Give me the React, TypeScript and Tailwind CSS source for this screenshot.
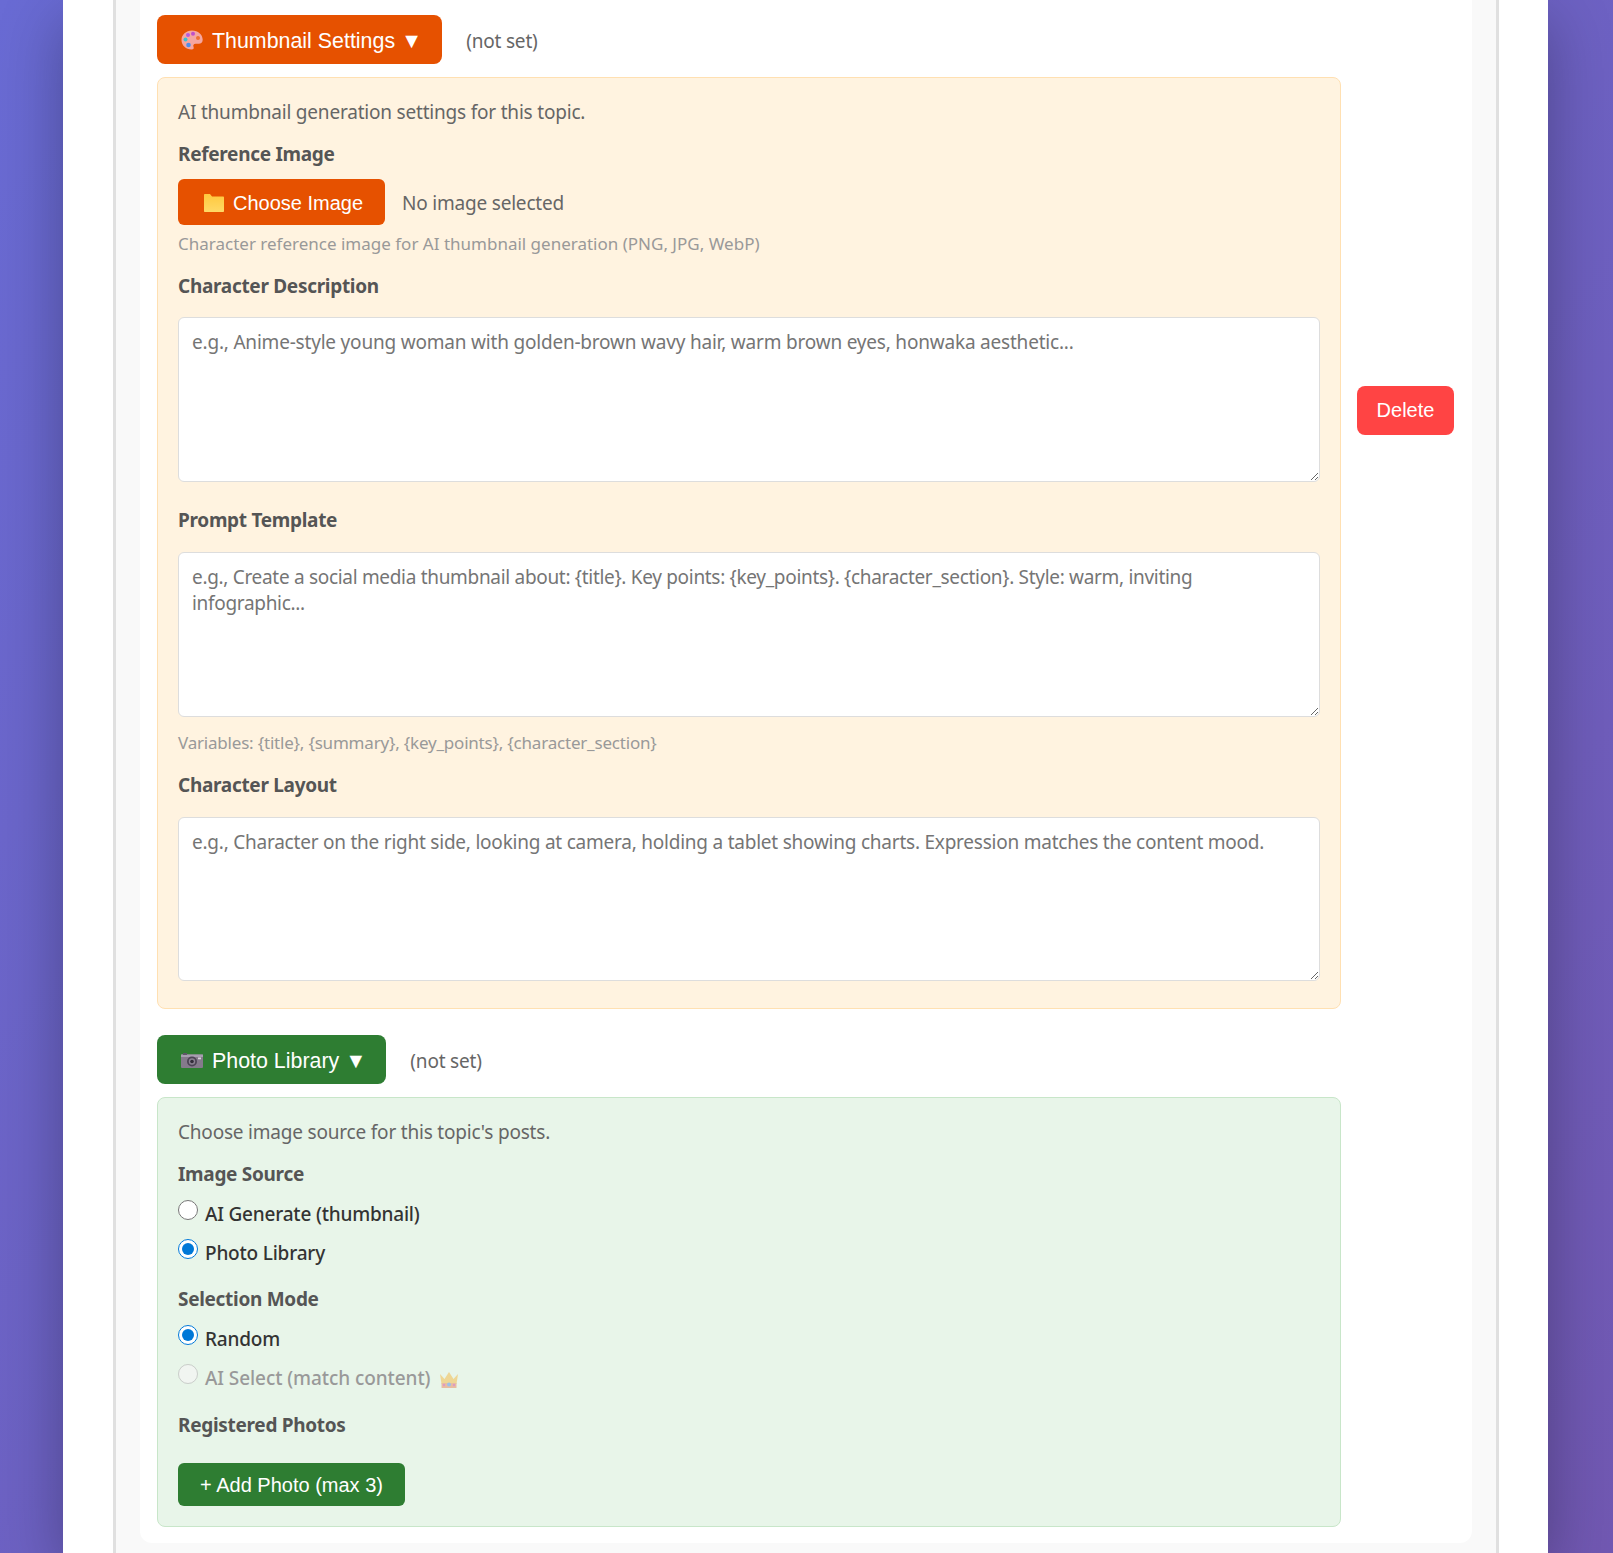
import type { ReactNode } from 'react';

const TEXT_FONT = "font-['Noto_Sans',sans-serif]";
const BTN_FONT = "font-['Liberation_Sans',Arial,sans-serif]";

const PaletteIcon = () => (
  <svg viewBox="0 0 22 20" className="w-[22px] h-[20px] shrink-0">
    <path d="M11 0.5C5 0.5 0.5 4.8 0.5 10c0 5.4 4.6 9.5 10 9.5 2.2 0 2.6-1.3 2-2.7-.7-1.6.2-3 2-3h3.2c2.4 0 4-1.6 4-4C21.700 4.500 17 0.500 11 0.500z" fill="#f5a6a0" />
    <circle cx="7" cy="5" r="2" fill="#b45ae0" />
    <circle cx="12" cy="3.800" r="2" fill="#c04fc8" />
    <circle cx="4.500" cy="9.500" r="2" fill="#3cc0d0" />
    <circle cx="7.500" cy="15" r="2.300" fill="#4f8fe8" />
    <circle cx="17" cy="8" r="2" fill="#f07030" />
  </svg>
);

const FolderIcon = () => (
  <svg viewBox="0 0 20 18" className="w-5 h-[18px] shrink-0">
    <defs>
      <linearGradient id="folderFill" x1="0" y1="0" x2="0" y2="1">
        <stop offset="0" stopColor="#ffc83d" />
        <stop offset="1" stopColor="#ffd966" />
      </linearGradient>
    </defs>
    <path d="M0 1C0 .4.400 0 1 0h5l2 2.500h11c.6 0 1 .4 1 1V17c0 .6-.4 1-1 1H1c-.6 0-1-.4-1-1z" fill="url(#folderFill)" />
  </svg>
);

const CameraIcon = () => (
  <svg viewBox="0 0 22 15" className="w-[22px] h-[15px] shrink-0">
    <rect x="0" y="1.500" width="22" height="13.500" rx="1" fill="#857a8c" />
    <rect x="0" y="1.500" width="22" height="2.500" fill="#a79eb0" />
    <rect x="2" y="0" width="4" height="2" fill="#5f5668" />
    <rect x="17" y="4.500" width="3" height="1.800" fill="#d8d4dc" />
    <circle cx="11" cy="8.500" r="5" fill="#4d4456" />
    <circle cx="11" cy="8.500" r="3.200" fill="#8a8192" />
    <circle cx="11" cy="8.500" r="1.800" fill="#332c3a" />
  </svg>
);

const CrownIcon = () => (
  <svg viewBox="0 0 20 16" className="w-5 h-4 shrink-0 opacity-50">
    <path d="M1 2l4.500 5L10 0l4.500 7L19 2l-1.500 10h-15z" fill="#f5b942" />
    <rect x="2.500" y="11" width="15" height="5" rx=".5" fill="#e8855a" />
    <circle cx="10" cy="12.500" r="2" fill="#4f8fe8" />
    <circle cx="5" cy="13" r="1.200" fill="#d6409f" />
    <circle cx="15" cy="13" r="1.200" fill="#d6409f" />
  </svg>
);

function Label({ children, className = '' }: { children: ReactNode; className?: string }) {
  return <div className={`h-7 leading-7 text-[19px] font-bold tracking-[-0.3px] text-[#555] ${className}`}>{children}</div>;
}

function Hint({ children, className = '' }: { children: ReactNode; className?: string }) {
  return <div className={`h-6 leading-6 text-[17px] text-[#999] ${className}`}>{children}</div>;
}

function Area({ placeholder, className = '' }: { placeholder: string; className?: string }) {
  return (
    <textarea
      placeholder={placeholder}
      className={`block w-full px-[13px] py-[11px] bg-white border border-[#ddd] rounded-md text-[19px] leading-[26px] placeholder:text-[#757575] resize-y outline-none ${TEXT_FONT} ${className}`}
    />
  );
}

function Radio({ label, checked, disabled, name, className = '', children }: { label: string; checked?: boolean; disabled?: boolean; name: string; className?: string; children?: ReactNode }) {
  return (
    <label className={`flex items-start h-7 ${className}`}>
      <input type="radio" name={name} defaultChecked={checked} disabled={disabled} className="w-5 h-5 m-0 shrink-0 accent-[#0078d7]" />
      <span className={`ml-[7px] leading-7 text-[19px] font-medium ${disabled ? 'text-[#999] tracking-[-0.08px]' : 'text-[#333] tracking-[-0.2px]'}`}>{label}</span>
      {children}
    </label>
  );
}

function ToggleRow({ icon, title, color, className = '' }: { icon: ReactNode; title: string; color: string; className?: string }) {
  return (
    <div className={`flex items-center gap-6 ${className}`}>
      <button className={`flex items-center h-[49px] pl-6 pr-5 pt-[3px] rounded-lg text-white text-[21.4px] ${color} ${BTN_FONT}`}>
        <span className="relative -top-px">{icon}</span>
        <span className="ml-[9px]">{title} ▼</span>
      </button>
      <span className="text-[19px] tracking-[-0.2px] text-[#666] relative top-[2px]">(not set)</span>
    </div>
  );
}

export default function App() {
  return (
    <div className={`h-[1553px] overflow-hidden bg-[linear-gradient(135deg,#696bd4,#7158b2)] flex justify-center pr-[2px] ${TEXT_FONT}`}>
      <div className="w-[1485px] h-full bg-white pl-[50px] pr-[49px] shadow-[0_20px_60px_rgba(0,0,0,0.3)]">
        <div className="h-full border-x-[3px] border-[#e0e0e0] bg-[#f9f9f9] px-6">
          <div className="h-[1543px] bg-white rounded-b-xl px-[17px] pt-[15px] flex items-start">
            <div className="w-[1184px] shrink-0">
              <ToggleRow icon={<PaletteIcon />} title="Thumbnail Settings" color="bg-[#e65100]" />

              {/* Thumbnail panel */}
              <div className="mt-[13px] h-[932px] bg-[#fff3e0] border border-[#ffe0b2] rounded-lg px-5 pt-5">
                <p className="h-7 leading-7 text-[19px] tracking-[-0.2px] text-[#666]">AI thumbnail generation settings for this topic.</p>
                <Label className="mt-3.5">Reference Image</Label>
                <div className="mt-[11px] flex items-center">
                  <button className={`flex items-center justify-center w-[207px] h-[46px] rounded-md bg-[#e65100] text-white text-[20px] leading-[46px] pt-[2px] pl-1 ${BTN_FONT}`}>
                    <FolderIcon />
                    <span className="ml-[9px]">Choose Image</span>
                  </button>
                  <span className="ml-[17px] text-[19px] tracking-[-0.2px] text-[#666] relative top-[1px]">No image selected</span>
                </div>
                <Hint className="mt-[7px]">Character reference image for AI thumbnail generation (PNG, JPG, WebP)</Hint>
                <Label className="mt-4">Character Description</Label>
                <Area className="mt-[17px] h-[165px] tracking-[-0.2px]" placeholder="e.g., Anime-style young woman with golden-brown wavy hair, warm brown eyes, honwaka aesthetic..." />
                <Label className="mt-6">Prompt Template</Label>
                <Area className="mt-[18px] h-[165px] tracking-[-0.31px]" placeholder="e.g., Create a social media thumbnail about: {title}. Key points: {key_points}. {character_section}. Style: warm, inviting infographic..." />
                <Hint className="mt-3.5 tracking-[-0.2px]">{'Variables: {title}, {summary}, {key_points}, {character_section}'}</Hint>
                <Label className="mt-4">Character Layout</Label>
                <Area className="mt-[18px] h-[164px] tracking-[-0.23px]" placeholder="e.g., Character on the right side, looking at camera, holding a tablet showing charts. Expression matches the content mood." />
              </div>

              <ToggleRow className="mt-[26px]" icon={<CameraIcon />} title="Photo Library" color="bg-[#2e7d32]" />

              {/* Photo panel */}
              <div className="mt-[13px] bg-[#e8f5e9] border border-[#c8e6c9] rounded-lg px-5 pt-5 pb-5">
                <p className="h-7 leading-7 text-[19px] tracking-[-0.2px] text-[#666]">Choose image source for this topic's posts.</p>
                <Label className="mt-3.5">Image Source</Label>
                <Radio className="mt-3" name="source" label="AI Generate (thumbnail)" />
                <Radio className="mt-[11px]" name="source" label="Photo Library" checked />
                <Label className="mt-[18px]">Selection Mode</Label>
                <Radio className="mt-3" name="mode" label="Random" checked />
                <Radio className="mt-[11px]" name="mode" label="AI Select (match content)" disabled>
                  <span className="ml-[9px] mt-2"><CrownIcon /></span>
                </Radio>
                <Label className="mt-[19px]">Registered Photos</Label>
                <button className={`block mt-6 w-[227px] h-[43px] rounded-md bg-[#2e7d32] text-white text-[20px] ${BTN_FONT}`}>+ Add Photo (max 3)</button>
              </div>
            </div>

            <button className={`ml-4 mt-[371px] w-[97px] h-[49px] pb-px rounded-lg bg-[#ff4444] text-white text-[20px] ${BTN_FONT}`}>Delete</button>
          </div>
        </div>
      </div>
    </div>
  );
}
